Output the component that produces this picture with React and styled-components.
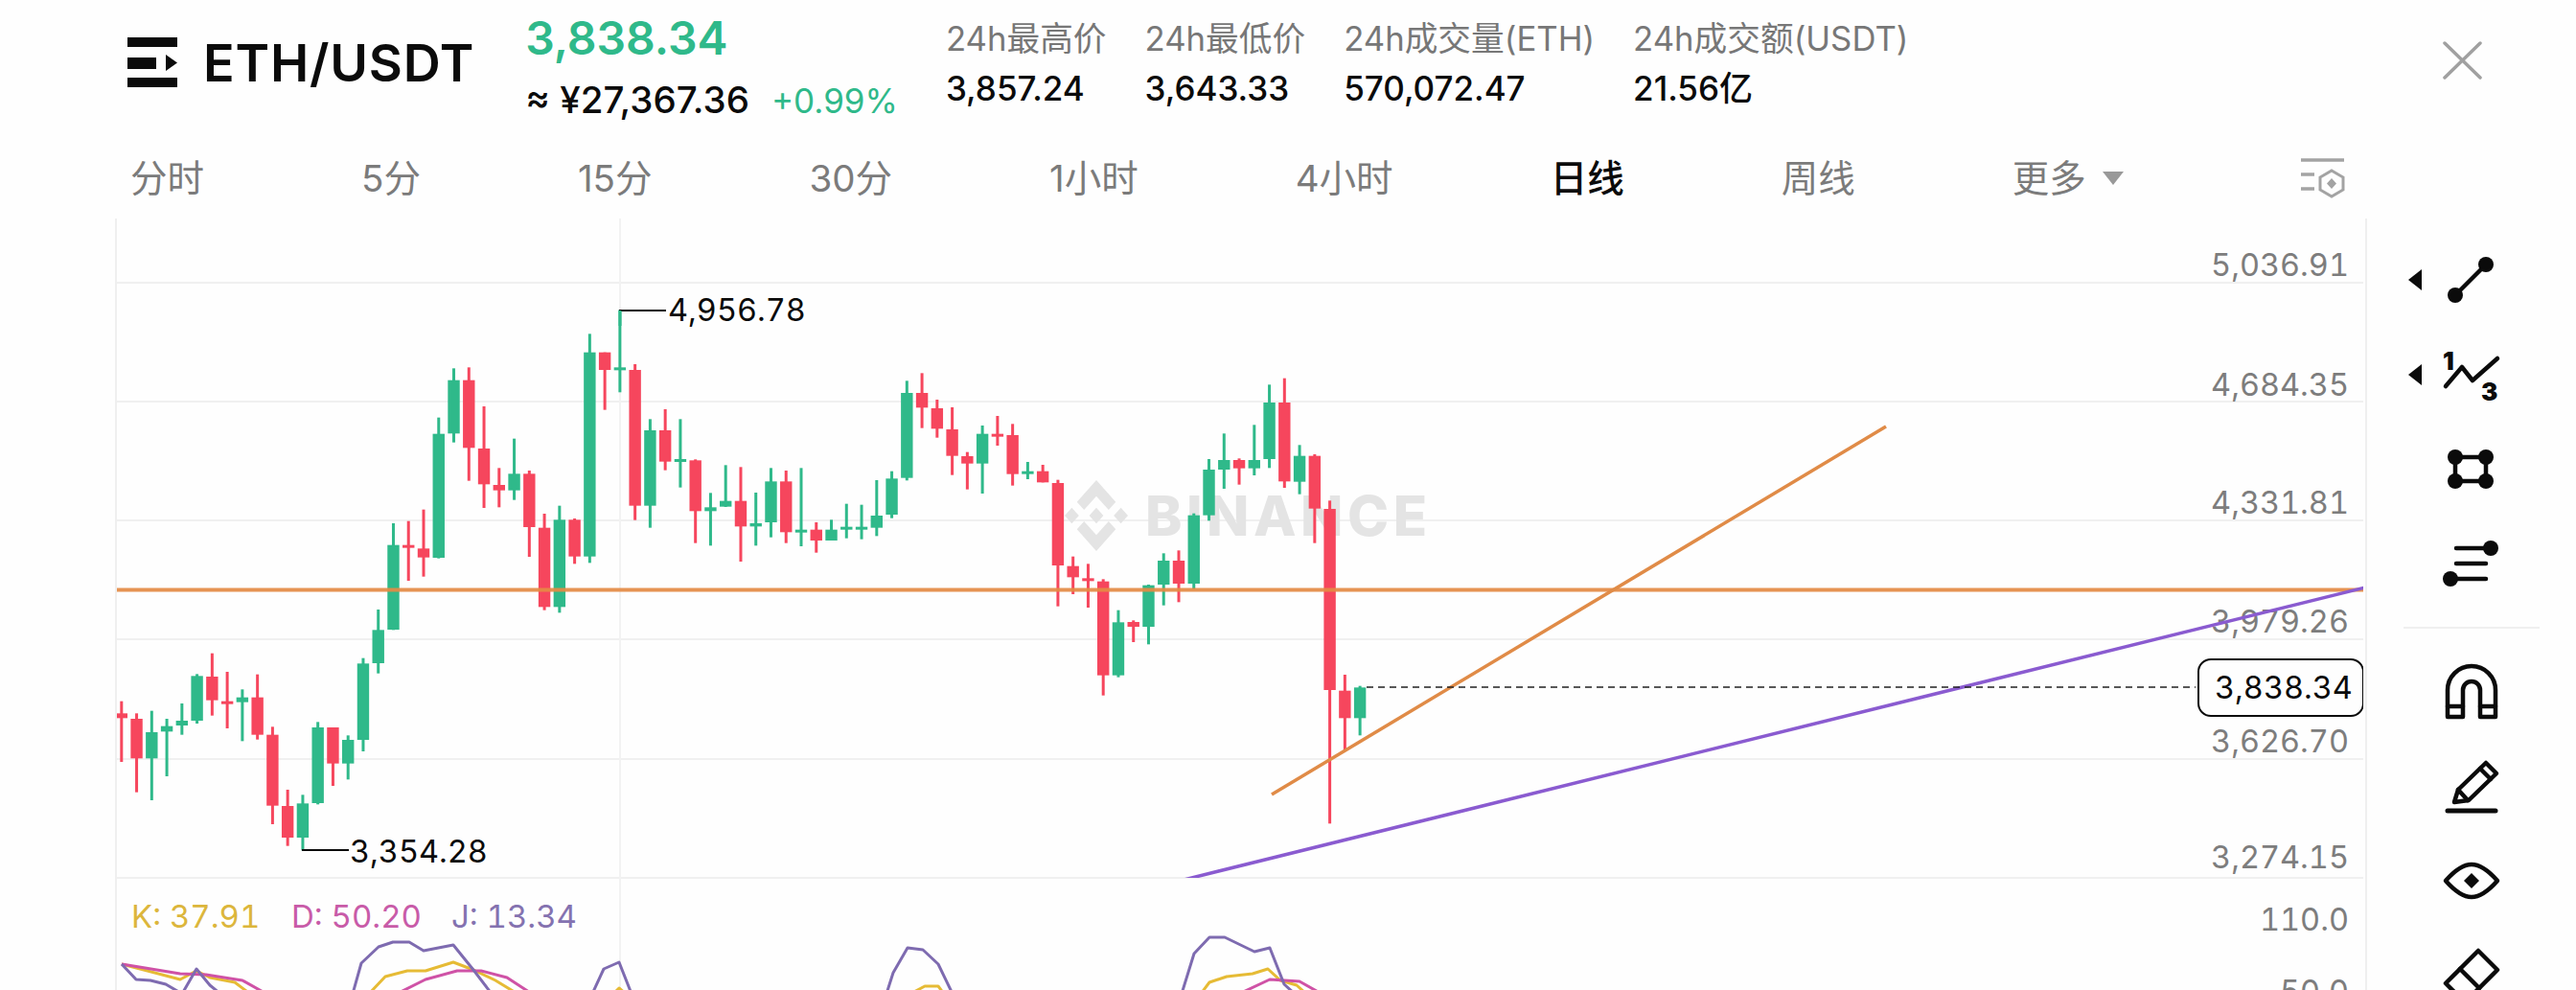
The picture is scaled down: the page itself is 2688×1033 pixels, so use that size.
import React from 'react';
import styled, { createGlobalStyle } from 'styled-components';

const GREEN = '#2fb98a';
const RED = '#f6465d';
const FONT = '"Inter", "Noto Sans CJK SC", sans-serif';

const GlobalStyle = createGlobalStyle`
    html, body {
        margin: 0;
        padding: 0;
        background: #fefefe;
        overflow: hidden;
    }
`;

const Page = styled.div`
    display: flex;
    flex-direction: column;
    width: 2688px;
    height: 1033px;
    overflow: hidden;
    background: #fefefe;
    font-family: ${FONT};
`;

const Header = styled.header`
    display: flex;
    height: 138px;
    box-sizing: border-box;
    padding: 10px 98px 0 133px;
`;

const Pair = styled.div`
    display: flex;
    align-items: center;
    gap: 27px;
    height: 110px;
    margin-right: 53px;
`;

const PairName = styled.span`
    font-size: 54px;
    font-weight: 600;
    color: #0b0b0b;
    letter-spacing: 0.8px;
`;

const PriceBlock = styled.div`
    display: flex;
    flex-direction: column;
    gap: 12px;
    margin-right: 50px;
`;

const LastPrice = styled.div`
    font-size: 48px;
    line-height: 60px;
    font-weight: 600;
    color: ${GREEN};
`;

const PriceRow = styled.div`
    display: flex;
    align-items: baseline;
    gap: 23px;
    line-height: 44px;
`;

const Fiat = styled.span`
    font-size: 38.5px;
    font-weight: 500;
    color: #0b0b0b;
`;

const Change = styled.span`
    font-size: 35px;
    color: ${GREEN};
`;

const Stats = styled.div`
    display: flex;
    gap: 40px;
    padding-top: 8px;
`;

const Stat = styled.div`
    display: flex;
    flex-direction: column;
    gap: 8px;
`;

const StatLabel = styled.span`
    font-size: 34.7px;
    line-height: 44px;
    color: #777;
`;

const StatValue = styled.span`
    font-size: 35px;
    line-height: 44px;
    font-weight: 500;
    color: #0b0b0b;
`;

const CloseButton = styled.div`
    margin: 33px 0 0 auto;
`;

const Tabs = styled.nav`
    display: flex;
    align-items: center;
    gap: 164px;
    height: 90px;
    box-sizing: border-box;
    padding: 6px 241px 0 136px;
`;

const Tab = styled.span`
    display: flex;
    align-items: center;
    gap: 17px;
    font-size: 38.5px;
    line-height: 44px;
    font-weight: ${props => (props.$active ? 500 : 400)};
    color: ${props => (props.$active ? '#0b0b0b' : '#7b7b7b')};
`;

const TabIcon = styled.div`
    display: flex;
    margin-left: auto;
`;

const Main = styled.main`
    display: flex;
    flex: 1;
    min-height: 0;
    padding-left: 120px;
`;

const ChartPane = styled.div`
    width: 2346px;
    border-left: 2px solid #efefef;
    border-right: 2px solid #efefef;
`;

const ChartSvg = styled.svg`
    display: block;
    font-family: ${FONT};
    font-variant-numeric: tabular-nums;
`;

const AxisLabel = styled.text`
    font-size: 32.5px;
    fill: #7d7d7d;
    text-anchor: end;
`;

const PriceLabel = styled.text`
    font-size: 32.5px;
    fill: #0b0b0b;
`;

const KdjLabel = styled.text`
    font-size: 33px;
    fill: ${props => props.$color};
`;

const Watermark = styled.text`
    font-size: 58px;
    font-weight: 800;
    fill: #e4e4e4;
`;

const Toolbar = styled.aside`
    flex: 1;
    display: flex;
    flex-direction: column;
    padding-top: 15px;
`;

const ToolRow = styled.div`
    position: relative;
    display: flex;
    flex: none;
    align-items: center;
    justify-content: center;
    height: 98.5px;
`;

const ToolArrow = styled.span`
    position: absolute;
    left: 43px;
    top: 38px;
    width: 0;
    height: 0;
    border-top: 11px solid transparent;
    border-bottom: 11px solid transparent;
    border-right: 14px solid #0b0b0b;
`;

const ToolDivider = styled.div`
    flex: none;
    width: 142px;
    height: 2px;
    margin: 17px 0 17px 38px;
    background: #efefef;
`;

const Triangle = styled.span`
    width: 0;
    height: 0;
    border-left: 11px solid transparent;
    border-right: 11px solid transparent;
    border-top: 14px solid #999;
`;

const TABS = ['分时', '5分', '15分', '30分', '1小时', '4小时', '日线', '周线'];

const STATS = [
    { label: '24h最高价', value: '3,857.24' },
    { label: '24h最低价', value: '3,643.33' },
    { label: '24h成交量(ETH)', value: '570,072.47' },
    { label: '24h成交额(USDT)', value: '21.56亿' }
];

// candles, read off the picture: colour, wick top, wick bottom, body top, body bottom
// y = 300 + value / 3
const CANDLES = [
    ['r', 1295, 1485, 1333, 1348], ['r', 1333, 1580, 1350, 1474], ['g', 1325, 1605, 1392, 1474],
    ['g', 1350, 1530, 1373, 1390], ['g', 1302, 1400, 1356, 1371], ['g', 1210, 1365, 1216, 1356],
    ['r', 1145, 1340, 1218, 1292], ['r', 1203, 1380, 1295, 1303], ['g', 1258, 1420, 1283, 1298],
    ['r', 1211, 1415, 1283, 1400], ['r', 1375, 1680, 1400, 1622], ['r', 1572, 1748, 1623, 1722],
    ['g', 1588, 1762, 1615, 1722], ['g', 1360, 1618, 1377, 1614], ['r', 1377, 1560, 1377, 1490],
    ['g', 1402, 1540, 1416, 1490], ['g', 1160, 1452, 1177, 1416], ['g', 1008, 1208, 1072, 1176],
    ['g', 738, 1072, 806, 1071], ['r', 731, 918, 806, 815], ['r', 695, 905, 817, 845],
    ['g', 407, 848, 458, 846], ['g', 253, 485, 290, 457], ['r', 250, 605, 290, 502],
    ['r', 372, 690, 504, 616], ['r', 565, 688, 618, 635], ['g', 473, 665, 583, 635],
    ['r', 573, 843, 583, 750], ['r', 708, 1010, 752, 1000], ['g', 683, 1018, 727, 1000],
    ['r', 723, 865, 727, 842], ['g', 145, 862, 203, 842], ['r', 203, 383, 203, 258],
    ['g', 70, 328, 250, 258], ['r', 240, 728, 258, 683], ['g', 412, 752, 447, 683],
    ['r', 381, 572, 447, 545], ['g', 412, 626, 537, 545], ['r', 538, 800, 541, 700],
    ['g', 643, 808, 688, 700], ['g', 556, 687, 668, 686], ['r', 562, 858, 668, 748],
    ['g', 642, 808, 738, 748], ['g', 565, 782, 607, 735], ['r', 573, 800, 607, 766],
    ['g', 565, 810, 758, 766], ['r', 735, 830, 758, 792], ['g', 727, 792, 758, 792],
    ['g', 677, 785, 749, 757], ['g', 680, 788, 749, 757], ['g', 603, 778, 714, 752],
    ['g', 575, 722, 598, 711], ['g', 292, 604, 330, 596], ['r', 268, 440, 330, 376],
    ['r', 351, 470, 378, 442], ['r', 375, 587, 444, 527], ['r', 515, 632, 528, 551],
    ['g', 432, 645, 458, 551], ['r', 402, 495, 458, 466], ['r', 427, 620, 462, 584],
    ['g', 546, 600, 575, 584], ['r', 555, 610, 575, 610], ['r', 602, 998, 612, 870],
    ['r', 842, 960, 872, 907], ['r', 865, 1002, 910, 918], ['r', 913, 1277, 920, 1214],
    ['g', 1010, 1220, 1048, 1214], ['r', 1042, 1110, 1047, 1062], ['g', 930, 1117, 932, 1062],
    ['g', 832, 995, 855, 930], ['r', 823, 985, 855, 927], ['g', 707, 945, 713, 927],
    ['g', 537, 730, 570, 713], ['g', 457, 630, 540, 570], ['r', 535, 617, 540, 566],
    ['g', 430, 588, 540, 566], ['g', 304, 565, 360, 537], ['r', 284, 627, 360, 607],
    ['g', 493, 647, 527, 608], ['r', 522, 800, 527, 692], ['r', 667, 1678, 693, 1260],
    ['r', 1212, 1450, 1262, 1348], ['g', 1247, 1402, 1252, 1348]
];

const GRID_Y = [295, 419, 543, 667, 792, 916];

const AXIS = [
    { text: '5,036.91', y: 288 },
    { text: '4,684.35', y: 413 },
    { text: '4,331.81', y: 536 },
    { text: '3,979.26', y: 660 },
    { text: '3,626.70', y: 785 },
    { text: '3,274.15', y: 906 },
    { text: '110.0', y: 971 },
    { text: '50.0', y: 1046 }
];

const KDJ_LINES = [
    { color: '#e6bb35', points: ['127,1006 150,1012 188,1022 205,1013 219,1020 245,1025 261,1037', '385,1037 402,1019 425,1013 444,1013 473,1004 494,1012 517,1023 540,1037', '640,1037 646,1031 653,1037', '950,1037 965,1029 979,1029 985,1037', '1253,1037 1262,1025 1280,1019 1307,1016 1323,1011 1336,1023 1353,1028 1363,1037'] },
    { color: '#cf52a6', points: ['127,1006 188,1016 215,1017 253,1023 278,1037', '414,1037 444,1022 477,1013 502,1013 529,1020 555,1037', '1293,1037 1325,1022 1356,1024 1379,1037'] },
    { color: '#7e6bb0', points: ['127,1006 142,1022 157,1023 173,1027 190,1037 205,1011 219,1028 230,1037', '368,1037 377,1005 395,988 410,983 427,983 442,992 473,986 494,1012 513,1037', '618,1037 630,1011 646,1004 659,1037', '925,1037 932,1015 947,989 963,991 979,1006 994,1037', '1233,1037 1246,995 1262,978 1278,978 1309,993 1325,989 1340,1027 1351,1037'] }
];

const BinanceMark = () => (
    <g transform="translate(1144 538) scale(33 37)" fill="#e4e4e4">
        <polygon points="-.388,-.16 0,-.547 .389,-.16 .613,-.384 0,-1 -.613,-.384" />
        <polygon points="-.388,.16 0,.547 .389,.16 .613,.384 0,1 -.613,.384" />
        <polygon points="-1,0 -.776,-.224 -.551,0 -.776,.224" />
        <polygon points="1,0 .776,-.224 .551,0 .776,.224" />
        <polygon points="0,-.224 .224,0 0,.224 -.224,0" />
    </g>
);

const Candle = ({ index, data }) => {
    const [colour, wickTop, wickBottom, bodyTop, bodyBottom] = data;
    const x = 126.8 + index * 15.76;
    const y = value => 300 + value / 3;
    const fill = colour === 'g' ? GREEN : RED;
    return (
        <g fill={fill}>
            <rect x={x - 1.5} y={y(wickTop)} width="3" height={(wickBottom - wickTop) / 3} />
            <rect x={x - 6.2} y={y(bodyTop)} width="12.4" height={Math.max((bodyBottom - bodyTop) / 3, 3)} />
        </g>
    );
};

const Chart = () => (
    <ChartSvg width="2344" height="805" viewBox="122 228 2344 805">
        <defs>
            <clipPath id="price-pane">
                <rect x="122" y="228" width="2346" height="688" />
            </clipPath>
        </defs>

        {GRID_Y.map(y => (
            <line key={y} x1="122" x2="2468" y1={y} y2={y} stroke="#f0f0f0" strokeWidth="2" />
        ))}
        <line x1="647" x2="647" y1="228" y2="1033" stroke="#f2f2f2" strokeWidth="2" />

        <BinanceMark />
        <Watermark x="1195" y="559" textLength="294">BINANCE</Watermark>

        {AXIS.map(item => (
            <AxisLabel key={item.text} x="2451" y={item.y}>{item.text}</AxisLabel>
        ))}

        {CANDLES.map((candle, i) => (
            <Candle key={i} index={i} data={candle} />
        ))}

        <line x1="122" x2="2468" y1="615.5" y2="615.5" stroke="#e58b45" strokeWidth="4" opacity="0.92" />
        <line x1="1327" y1="829" x2="1968" y2="445" stroke="#e08b47" strokeWidth="3.5" />
        <line x1="1203" y1="926" x2="2468" y2="613" stroke="#8a5bd0" strokeWidth="3.5" clipPath="url(#price-pane)" />

        <polyline points="647,340 647,324 695,324" fill="none" stroke="#0b0b0b" strokeWidth="2" />
        <line x1="647" x2="647" y1="324" y2="340" stroke={GREEN} strokeWidth="3" />
        <PriceLabel x="697" y="335">4,956.78</PriceLabel>
        <line x1="315" x2="364" y1="887" y2="887" stroke="#0b0b0b" strokeWidth="2" />
        <PriceLabel x="365" y="900">3,354.28</PriceLabel>

        <line x1="1426" x2="2291" y1="717" y2="717" stroke="#222" strokeWidth="1.5" strokeDasharray="7 5" />
        <rect x="2294" y="688" width="172" height="59" rx="13" fill="#fefefe" stroke="#0b0b0b" strokeWidth="2" />
        <PriceLabel x="2311" y="729">3,838.34</PriceLabel>

        <KdjLabel x="137" y="968" $color="#dcb63c">K: 37.91</KdjLabel>
        <KdjLabel x="304" y="968" $color="#c85ba8">D: 50.20</KdjLabel>
        <KdjLabel x="471" y="968" $color="#8472b0">J: 13.34</KdjLabel>

        {KDJ_LINES.map(line => line.points.map(points => (
            <polyline key={points} points={points} fill="none" stroke={line.color} strokeWidth="3" strokeLinejoin="round" />
        )))}
    </ChartSvg>
);

const Icon = ({ children }) => (
    <svg width="64" height="64" viewBox="0 0 64 64" fill="none" stroke="#0b0b0b" strokeWidth="4.5" strokeLinecap="round" strokeLinejoin="round">
        {children}
    </svg>
);

const ToolIcons = [
    <Icon key="trend">
        <line x1="15" y1="48" x2="47" y2="16" />
        <circle cx="47" cy="16" r="8" fill="#0b0b0b" stroke="none" />
        <circle cx="15" cy="48" r="8" fill="#0b0b0b" stroke="none" />
    </Icon>,
    <Icon key="fib">
        <polyline points="5,44 22,24 33,38 59,15" />
        <text x="2" y="27" fontFamily="Inter" fontSize="26" fontWeight="900" fill="#0b0b0b" stroke="none">1</text>
        <text x="42" y="59" fontFamily="Inter" fontSize="26" fontWeight="900" fill="#0b0b0b" stroke="none">3</text>
    </Icon>,
    <Icon key="shape">
        <rect x="15" y="20" width="32" height="25" />
        <circle cx="15" cy="20" r="8" fill="#0b0b0b" stroke="none" />
        <circle cx="47" cy="20" r="8" fill="#0b0b0b" stroke="none" />
        <circle cx="15" cy="45" r="8" fill="#0b0b0b" stroke="none" />
        <circle cx="47" cy="45" r="8" fill="#0b0b0b" stroke="none" />
    </Icon>,
    <Icon key="lines">
        <line x1="16" y1="16" x2="50" y2="16" />
        <line x1="16" y1="32" x2="47" y2="32" />
        <line x1="12" y1="48" x2="47" y2="48" />
        <circle cx="52" cy="16" r="8" fill="#0b0b0b" stroke="none" />
        <circle cx="10" cy="48" r="8" fill="#0b0b0b" stroke="none" />
    </Icon>
];

const SecondIcons = [
    <Icon key="magnet">
        <path d="M7 58 V30 a25 25 0 0 1 50 0 V58 H41 V30 a9 9 0 0 0 -18 0 V58 Z" />
        <line x1="7" y1="47" x2="23" y2="47" />
        <line x1="41" y1="47" x2="57" y2="47" />
    </Icon>,
    <Icon key="pencil">
        <path d="M14 48 L18 35 L47 7 L58 18 L29 46 Z" />
        <line x1="18" y1="35" x2="28" y2="46" />
        <line x1="41" y1="13" x2="52" y2="24" />
        <line x1="7" y1="57" x2="57" y2="57" strokeWidth="5" />
    </Icon>,
    <Icon key="eye">
        <path d="M5 32 Q20 15 32 15 Q44 15 59 32 Q44 49 32 49 Q20 49 5 32 Z" />
        <polygon points="32,24 40,32 32,40 24,32" fill="#0b0b0b" stroke="none" />
    </Icon>,
    <Icon key="eraser">
        <polygon points="39,6 59,26 25,60 5,40" />
        <line x1="20" y1="25" x2="40" y2="45" />
    </Icon>
];

const App = () => (
    <Page>
        <GlobalStyle />
        <Header>
            <Pair>
                <svg width="52" height="52" viewBox="0 0 52 52" fill="#0b0b0b">
                    <rect x="0" y="0" width="52" height="10" />
                    <rect x="0" y="42" width="52" height="10" />
                    <rect x="0" y="21" width="30" height="12" />
                    <polygon points="40,18 52,26.5 40,35" />
                </svg>
                <PairName>ETH/USDT</PairName>
            </Pair>
            <PriceBlock>
                <LastPrice>3,838.34</LastPrice>
                <PriceRow>
                    <Fiat>≈ ¥27,367.36</Fiat>
                    <Change>+0.99%</Change>
                </PriceRow>
            </PriceBlock>
            <Stats>
                {STATS.map(stat => (
                    <Stat key={stat.label}>
                        <StatLabel>{stat.label}</StatLabel>
                        <StatValue>{stat.value}</StatValue>
                    </Stat>
                ))}
            </Stats>
            <CloseButton>
                <svg width="41" height="40" viewBox="0 0 41 40" fill="none" stroke="#a0a0a0" strokeWidth="3.5" strokeLinecap="round" display="block">
                    <line x1="2" y1="2" x2="39" y2="38" />
                    <line x1="39" y1="2" x2="2" y2="38" />
                </svg>
            </CloseButton>
        </Header>
        <Tabs>
            {TABS.map(tab => (
                <Tab key={tab} $active={tab === '日线'}>{tab}</Tab>
            ))}
            <Tab>更多<Triangle /></Tab>
            <TabIcon>
                <svg width="46" height="42" viewBox="0 0 46 42" fill="none" stroke="#a3a3a3" strokeWidth="3.5">
                    <line x1="0" y1="2" x2="45" y2="2" />
                    <line x1="0" y1="17" x2="14" y2="17" />
                    <line x1="0" y1="32" x2="14" y2="32" />
                    <polygon points="32,13 44,20 44,33 32,40 20,33 20,20" strokeWidth="3" />
                    <polygon points="32,21 37,26.5 32,32 27,26.5" fill="#a3a3a3" stroke="none" />
                </svg>
            </TabIcon>
        </Tabs>
        <Main>
            <ChartPane>
                <Chart />
            </ChartPane>
            <Toolbar>
                {ToolIcons.map((icon, i) => (
                    <ToolRow key={icon.key}>
                        {i < 2 && <ToolArrow />}
                        {icon}
                    </ToolRow>
                ))}
                <ToolDivider />
                {SecondIcons.map(icon => (
                    <ToolRow key={icon.key}>{icon}</ToolRow>
                ))}
            </Toolbar>
        </Main>
    </Page>
);

export default App;
